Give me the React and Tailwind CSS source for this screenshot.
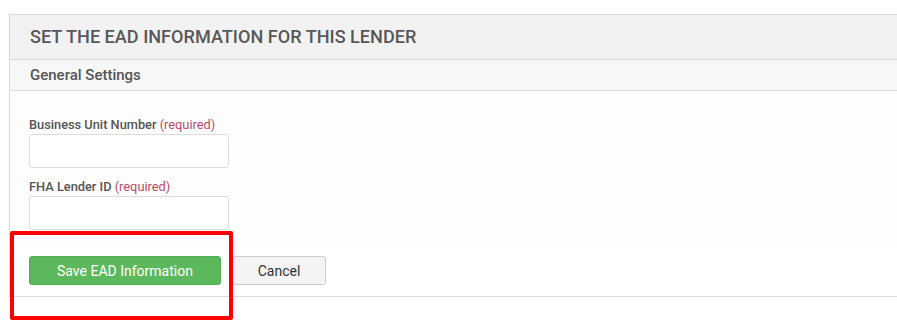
export default function App() {
  return (
    <div
      className="relative w-[897px] h-[328px] overflow-hidden bg-white pt-[14px]"
      style={{ fontFamily: 'Roboto, "Liberation Sans", sans-serif' }}
    >
      <div className="ml-[9px] w-[900px] border-l border-t border-b border-[#d9d9d9]">
        <div className="h-[45px] bg-[#f2f2f2] border-b border-[#d9d9d9] pl-[20px] flex items-center">
          <h2 className="text-[18.1px] font-medium text-[#585858] leading-none pt-[1px]">
            SET THE EAD INFORMATION FOR THIS LENDER
          </h2>
        </div>
        <div className="h-[31px] bg-[#f7f7f7] border-b border-[#d9d9d9] pl-[20px] flex items-center">
          <span className="text-[15px] font-medium text-[#555] leading-none">General Settings</span>
        </div>
        <div className="bg-[#fdfdfd] pl-[19px] pt-[25px] pb-[12px]">
          <label className="block text-[12.8px] leading-[18px] font-medium text-[#555]">
            Business Unit Number <span className="text-[#b94a6a] font-normal">(required)</span>
          </label>
          <input className="block w-[200px] h-[34px] border border-[#dcdcdc] rounded-[3px] bg-white" />
          <label className="block mt-[10px] text-[12.8px] leading-[18px] font-medium text-[#555]">
            FHA Lender ID <span className="text-[#b94a6a] font-normal">(required)</span>
          </label>
          <input className="block w-[200px] h-[34px] border border-[#dcdcdc] rounded-[3px] bg-white" />
        </div>
        <div className="bg-white pl-[19px] pt-[14px] pb-[11px] flex gap-[11px]">
          <button className="w-[192px] h-[29px] rounded-[3px] bg-[#5cb85c] border border-[#52ad52] text-white text-[14px] leading-none">
            Save EAD Information
          </button>
          <button className="w-[94px] h-[29px] rounded-[3px] bg-[#f4f4f4] border border-[#cccccc] text-[#333] text-[14px] leading-none">
            Cancel
          </button>
        </div>
      </div>
      <div className="absolute left-[10px] top-[231px] w-[223px] h-[89px] border-[4px] border-[#ff0000] rounded-[2px]" />
    </div>
  );
}
